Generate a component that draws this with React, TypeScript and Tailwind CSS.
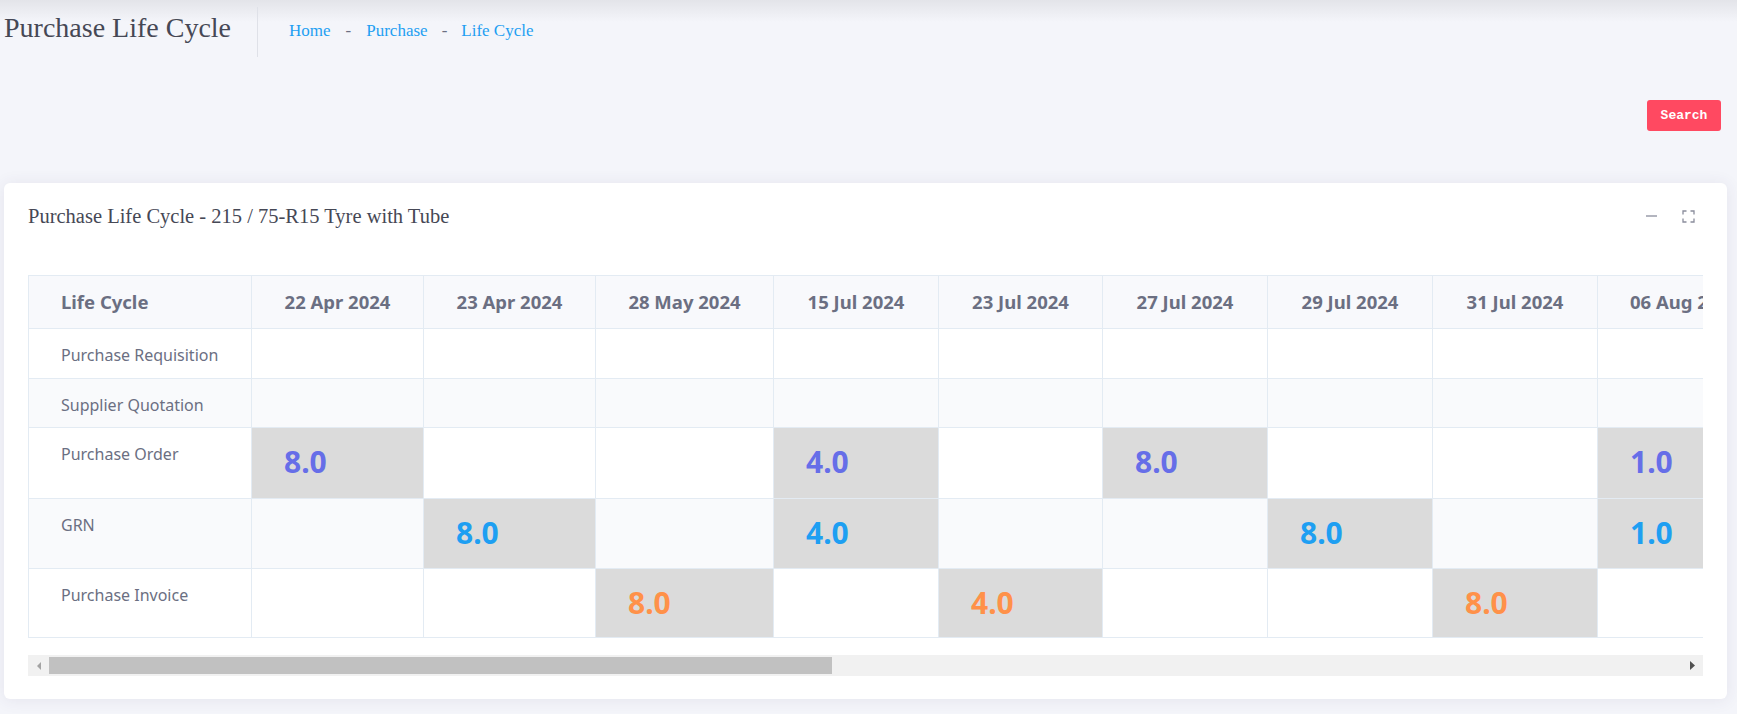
import React from 'react';

const dates = [
  '22 Apr 2024',
  '23 Apr 2024',
  '28 May 2024',
  '15 Jul 2024',
  '23 Jul 2024',
  '27 Jul 2024',
  '29 Jul 2024',
  '31 Jul 2024',
  '06 Aug 2024',
];

const colWidths = [
  'w-[172px]',
  'w-[172px]',
  'w-[178px]',
  'w-[165px]',
  'w-[164px]',
  'w-[165px]',
  'w-[165px]',
  'w-[165px]',
  'w-[172px]',
];

interface Row {
  label: string;
  height: string;
  striped: boolean;
  tone: string;
  values: Record<number, string>;
}

const rows: Row[] = [
  { label: 'Purchase Requisition', height: 'h-[50px]', striped: false, tone: '', values: {} },
  { label: 'Supplier Quotation', height: 'h-[49px]', striped: true, tone: '', values: {} },
  {
    label: 'Purchase Order',
    height: 'h-[71px]',
    striped: false,
    tone: 'text-[#666ee8]',
    values: { 0: '8.0', 3: '4.0', 5: '8.0', 8: '1.0' },
  },
  {
    label: 'GRN',
    height: 'h-[70px]',
    striped: true,
    tone: 'text-[#1e9ff2]',
    values: { 1: '8.0', 3: '4.0', 6: '8.0', 8: '1.0' },
  },
  {
    label: 'Purchase Invoice',
    height: 'h-[69px]',
    striped: false,
    tone: 'text-[#ff9149]',
    values: { 2: '8.0', 4: '4.0', 7: '8.0' },
  },
];

const serif = "font-['Liberation_Serif',Georgia,serif]";

function CornersIcon() {
  return (
    <svg width="13" height="13" viewBox="0 0 13 13" fill="none" stroke="#8a8d9c" strokeWidth="1.3">
      <path d="M1 4.5V1h3.5M8.5 1H12v3.5M12 8.5V12H8.5M4.5 12H1V8.5" />
    </svg>
  );
}

function Scrollbar() {
  return (
    <div className="mx-6 mt-[17px] flex h-[21px] items-center bg-[#f1f1f1]">
      <div className="flex h-full w-[21px] items-center justify-center">
        <svg width="4" height="8" viewBox="0 0 4 8">
          <polygon points="4,0 4,8 0,4" fill="#a3a3a3" />
        </svg>
      </div>
      <div className="h-[17px] w-[783px] bg-[#c1c1c1]" />
      <div className="flex-1" />
      <div className="flex h-full w-[21px] items-center justify-center">
        <svg width="5" height="9" viewBox="0 0 5 9">
          <polygon points="0,0 0,9 5,4.5" fill="#505050" />
        </svg>
      </div>
    </div>
  );
}

export default function App() {
  return (
    <div className="min-h-[714px] w-full bg-[#f4f5fa] bg-[linear-gradient(180deg,#e3e4e9_0px,#f4f5fa_22px)] pb-4 font-['Noto_Sans',sans-serif]">
      {/* Page header */}
      <div className="flex items-start pt-[7px]">
        <h1 className={`ml-1 mt-[5px] text-[28px] leading-[32px] text-[#464855] ${serif}`}>Purchase Life Cycle</h1>
        <div className="ml-[26px] h-[50px] w-px bg-[#dfe1e8]" />
        <nav className={`ml-[31px] mt-[12px] flex items-center text-[17px] leading-[24px] ${serif}`}>
          <a className="text-[#1e9ff2]">Home</a>
          <span className="px-[15px] text-[#6b6f82]">-</span>
          <a className="text-[#1e9ff2]">Purchase</a>
          <span className="px-[14px] text-[#6b6f82]">-</span>
          <a className="text-[#1e9ff2]">Life Cycle</a>
        </nav>
      </div>

      <div className="mt-[43px] flex justify-end pr-4">
        <button className="h-[31px] w-[74px] rounded-[3px] bg-[#ff4961] text-[13px] font-bold text-white font-['Liberation_Mono',monospace]">
          Search
        </button>
      </div>

      {/* Card */}
      <div className="ml-1 mr-[10px] mt-[52px] rounded-md bg-white pb-[23px] pt-[21px] shadow-[0_1px_15px_1px_rgba(62,57,107,0.08)]">
        <div className="flex items-center justify-between px-6">
          <h4 className={`text-[20.5px] leading-[24px] text-[#464855] ${serif}`}>
            Purchase Life Cycle - 215 / 75-R15 Tyre with Tube
          </h4>
          <div className="mr-2 flex items-center gap-[25px]">
            <svg width="11" height="2" viewBox="0 0 11 2">
              <line x1="0" y1="1" x2="11" y2="1" stroke="#8a8d9c" strokeWidth="1.3" />
            </svg>
            <CornersIcon />
          </div>
        </div>

        <div className="mx-6 mt-[47px] overflow-hidden">
          <table className="w-[1721px] table-fixed border-collapse">
            <colgroup>
              <col className="w-[223px]" />
              {colWidths.map((w, i) => (
                <col key={i} className={w} />
              ))}
            </colgroup>
            <thead>
              <tr className="h-[53px] bg-[#f8f9fc]">
                <th className="border border-[#e3ebf3] px-8 pt-[14px] text-left align-top text-[18.5px] font-bold leading-[24px] text-[#6b6f82] whitespace-nowrap">
                  Life Cycle
                </th>
                {dates.map((d) => (
                  <th
                    key={d}
                    className="border border-[#e3ebf3] px-8 pt-[14px] text-center align-top text-[18.5px] font-bold leading-[24px] text-[#6b6f82] whitespace-nowrap"
                  >
                    {d}
                  </th>
                ))}
              </tr>
            </thead>
            <tbody>
              {rows.map((row) => (
                <tr key={row.label} className={`${row.height} ${row.striped ? 'bg-[#f9fafc]' : 'bg-white'}`}>
                  <td className="border border-[#e3ebf3] px-8 pt-[14px] align-top text-[16px] leading-[24px] text-[#6b6f82] whitespace-nowrap">
                    {row.label}
                  </td>
                  {dates.map((d, i) => {
                    const v = row.values[i];
                    return (
                      <td
                        key={d}
                        className={`border border-[#e3ebf3] px-8 pt-[14px] align-top ${v ? 'bg-[#dbdbdb]' : ''}`}
                      >
                        {v && (
                          <span className={`block text-[30px] font-bold leading-[40px] ${row.tone}`}>{v}</span>
                        )}
                      </td>
                    );
                  })}
                </tr>
              ))}
            </tbody>
          </table>
        </div>

        <Scrollbar />
      </div>
    </div>
  );
}
